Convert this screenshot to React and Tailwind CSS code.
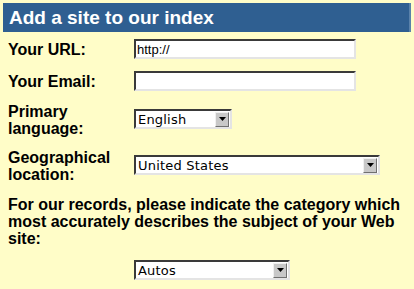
import React from "react";

// classic sunken text box
const TextBox = ({ value = "", width }) => (
  <div
    className={`${width} h-[20px] bg-white border-2 border-t-[#3a3a3a] border-l-[#3a3a3a] border-b-[#e4e4e4] border-r-[#e4e4e4] flex items-center pl-[1px] text-[13px] font-normal leading-none text-black font-['Liberation_Sans',Arial,sans-serif]`}
  >
    {value}
  </div>
);

// old-style dropdown with the grey arrow button
const DropDown = ({ value, width }) => (
  <div
    className={`${width} h-[20px] bg-white border-2 border-t-[#3a3a3a] border-l-[#3a3a3a] border-b-[#e4e4e4] border-r-[#e4e4e4] flex items-center`}
  >
    <span className="flex-1 pl-[2px] pt-[1px] text-[13px] tracking-[0.2px] font-normal text-black font-['DejaVu_Sans',Verdana,sans-serif] leading-none">
      {value}
    </span>
    <span className="w-[14px] h-[15px] mr-[1px] bg-[#c8c8c8] border border-t-[#f0f0f0] border-l-[#f0f0f0] border-b-[#707070] border-r-[#707070] flex items-center justify-center">
      <svg width="7" height="4" viewBox="0 0 7 4">
        <path d="M0 0h7L3.5 4z" fill="#000" />
      </svg>
    </span>
  </div>
);

const App = () => {
  return (
    <div className="w-[414px] h-[289px] bg-[#fffdc8] pt-[3px] px-[3px] font-['Liberation_Sans',Arial,sans-serif] text-black overflow-hidden">
      {/* header */}
      <div className="h-[29px] bg-[#2f5f91] border-r-2 border-r-[#5a82ab] flex items-center pl-[6px]">
        <span className="text-[19px] font-bold text-white leading-none">Add a site to our index</span>
      </div>

      {/* form rows */}
      <div className="pl-[5px] mt-[1px] text-[16px] font-bold leading-[17px]">
        <div className="grid grid-cols-[126px_1fr]">
          <div className="h-[32px] flex items-center pt-[1px]">Your URL:</div>
          <div className="h-[32px] flex items-center">
            <TextBox value="http://" width="w-[222px]" />
          </div>

          <div className="h-[31px] flex items-center pt-[1px]">Your Email:</div>
          <div className="h-[31px] flex items-center">
            <TextBox width="w-[222px]" />
          </div>

          <div className="h-[46px] flex items-center pt-[1px]">
            Primary
            <br />
            language:
          </div>
          <div className="h-[46px] flex items-center">
            <DropDown value="English" width="w-[98px]" />
          </div>

          <div className="h-[46px] flex items-center pt-[1px]">
            Geographical
            <br />
            location:
          </div>
          <div className="h-[46px] flex items-center">
            <DropDown value="United States" width="w-[246px]" />
          </div>
        </div>

        <p className="pt-[8px] pr-[8px]">
          For our records, please indicate the category which most accurately describes the subject of your Web site:
        </p>

        <div className="pl-[126px] mt-[13px]">
          <DropDown value="Autos" width="w-[156px]" />
        </div>
      </div>
    </div>
  );
};

export default App;
